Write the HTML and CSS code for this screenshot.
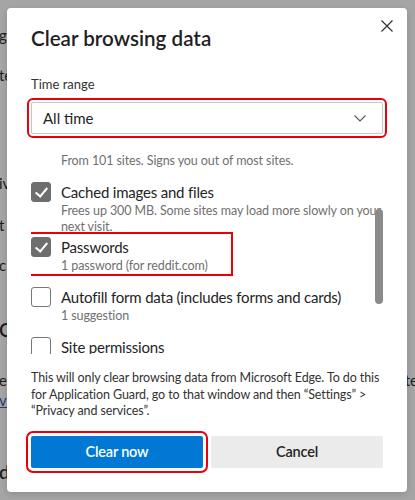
FILE: index.html
```html
<!DOCTYPE html>
<html lang="en">
<head>
  <meta charset="UTF-8" />
  <meta name="viewport" content="width=device-width, initial-scale=1" />
  <title>Clear browsing data</title>
  <link rel="stylesheet" href="styles.css">
</head>
<body>
  <!-- settings page behind the modal, dimmed -->
  <div class="page">
    <div class="ln l1">gs</div>
    <div class="ln l2">te</div>
    <div class="ln l3">iv</div>
    <div class="ln l4">t '</div>
    <div class="ln l5">c</div>
    <div class="ln l6 big">C</div>
    <div class="ln l7 split"><span>e</span><span>te</span></div>
    <div class="ln l8"><a href="#">va</a></div>
    <div class="ln l9 big">d</div>
  </div>

  <div class="dialog" role="dialog">
    <button class="close" aria-label="Close">
      <svg width="12" height="12" viewBox="0 0 12 12"><path d="M0.5 0.5 L11.5 11.5 M11.5 0.5 L0.5 11.5" stroke="#2b2b2b" stroke-width="1.1" fill="none"/></svg>
    </button>
    <h1>Clear browsing data</h1>
    <div class="field-label">Time range</div>
    <div class="select marked">
      <span>All time</span>
      <svg width="12" height="7" viewBox="0 0 12 7"><path d="M0.5 0.5 L6 6 L11.5 0.5" stroke="#555" stroke-width="1.1" fill="none"/></svg>
    </div>

    <div class="scroll">
      <ul class="list">
        <!-- scrolled past: only the description of "Cookies and other site data" shows -->
        <li class="item first">
          <span class="box-gap"></span>
          <div class="sub">From 101 sites. Signs you out of most sites.</div>
        </li>
        <li class="item">
          <span class="box checked"></span>
          <div>
            <div class="title">Cached images and files</div>
            <div class="sub">Frees up 300 MB. Some sites may load more slowly on your next visit.</div>
          </div>
        </li>
        <li class="item highlight">
          <span class="box checked"></span>
          <div>
            <div class="title">Passwords</div>
            <div class="sub">1 password (for reddit.com)</div>
          </div>
        </li>
        <li class="item">
          <span class="box"></span>
          <div>
            <div class="title">Autofill form data (includes forms and cards)</div>
            <div class="sub">1 suggestion</div>
          </div>
        </li>
        <li class="item">
          <span class="box"></span>
          <div>
            <div class="title">Site permissions</div>
          </div>
        </li>
      </ul>
      <div class="thumb"></div>
    </div>

    <p class="note">This will only clear browsing data from Microsoft Edge. To do this for Application Guard, go to that window and then “Settings” &gt; “Privacy and services”.</p>

    <div class="actions">
      <button class="btn primary marked">Clear now</button>
      <button class="btn">Cancel</button>
    </div>
  </div>
</body>
</html>
```

FILE: styles.css
```css
body {
  margin: 0;
  font-family: Lato, "Open Sans", sans-serif;
  background: #a5a5a5;
  color: #1c1c1c;
  width: 415px;
  height: 500px;
  overflow: hidden;
  position: relative;
}
.page {
  font-size: 15px;
  line-height: 20px;
  padding-top: 25px;
}
.ln {
  white-space: nowrap;
  margin-left: -1px;
}
.big {
  font-size: 19px;
  font-weight: 600;
}
.l2 { margin-top: 20px; }
.l3 { margin-top: 88px; }
.l4 { margin-top: 22px; }
.l5 { margin-top: 20px; }
.l6 { margin-top: 45px; }
.l7 { margin-top: 30px; display: flex; justify-content: space-between; margin-right: -3px; }
.l8 a { color: #1f3f6b; }
.l9 { margin-top: 52px; }

.dialog {
  position: absolute;
  top: 8px;
  left: 7px;
  width: 400px;
  box-sizing: border-box;
  padding: 16px 24px 24px;
  background: #fff;
  border-radius: 4px;
  box-shadow: 0 2px 6px rgba(0, 0, 0, 0.15);
  color: #242424;
}
.close {
  position: absolute;
  top: 12px;
  right: 14px;
  padding: 0;
  border: none;
  background: none;
  width: 12px;
  height: 12px;
  display: flex;
}
h1 {
  margin: 0;
  font-size: 20.6px;
  line-height: 28px;
  font-weight: 600;
  color: #1f1f1f;
}
.field-label {
  margin-top: 22px;
  font-size: 13px;
  line-height: 20px;
  color: #333;
}
.select {
  margin-top: 8px;
  height: 32px;
  box-sizing: border-box;
  border: 1px solid #c6c6c6;
  border-radius: 2px;
  display: flex;
  align-items: center;
  justify-content: space-between;
  padding: 0 16px 0 11px;
  font-size: 15px;
  color: #242424;
}
.marked {
  outline: 2px solid #e8000b;
  outline-offset: 2px;
}
.scroll {
  position: relative;
  margin-top: 19px;
  height: 201px;
  overflow: hidden;
}
.list {
  list-style: none;
  margin: 0;
  padding: 0;
  display: flex;
  flex-direction: column;
  gap: 2px;
}
.item {
  display: flex;
  gap: 10px;
  min-height: 48px;
  position: relative;
}
.item.first {
  min-height: 27px;
}
.box-gap {
  flex: none;
  width: 20px;
}
.highlight::after {
  content: "";
  position: absolute;
  top: -5px;
  left: -13px;
  width: 211px;
  height: 40px;
  border: 2px solid #e8000b;
}
.box {
  flex: none;
  width: 20px;
  height: 20px;
  box-sizing: border-box;
  border: 1px solid #777;
  border-radius: 3px;
  background: #fff;
  position: relative;
}
.box.checked {
  background: #6e6e6e;
  border-color: #6e6e6e;
}
.box.checked::after {
  content: "";
  position: absolute;
  left: 6px;
  top: 2px;
  width: 5px;
  height: 10px;
  border: solid #fff;
  border-width: 0 2px 2px 0;
  transform: rotate(40deg);
}
.title {
  font-size: 15px;
  line-height: 22px;
  letter-spacing: -0.2px;
  color: #242424;
  margin-top: -1px;
}
.sub {
  font-size: 12.5px;
  line-height: 16px;
  letter-spacing: -0.1px;
  color: #707070;
}
.thumb {
  position: absolute;
  top: 56px;
  right: 0;
  width: 8px;
  height: 95px;
  border-radius: 4px;
  background: #8a8a8a;
}
.note {
  margin: 16px 0 0;
  font-size: 12.5px;
  line-height: 16.5px;
  letter-spacing: -0.1px;
  color: #333;
}
.actions {
  margin-top: 16px;
  display: flex;
  gap: 8px;
}
.btn {
  flex: 1;
  height: 32px;
  border: none;
  border-radius: 2px;
  background: #ebebeb;
  font-family: inherit;
  font-size: 14.5px;
  font-weight: 600;
  letter-spacing: -0.2px;
  color: #242424;
}
.btn.primary {
  background: #0078d4;
  color: #fff;
  outline-offset: 3px;
}
```
